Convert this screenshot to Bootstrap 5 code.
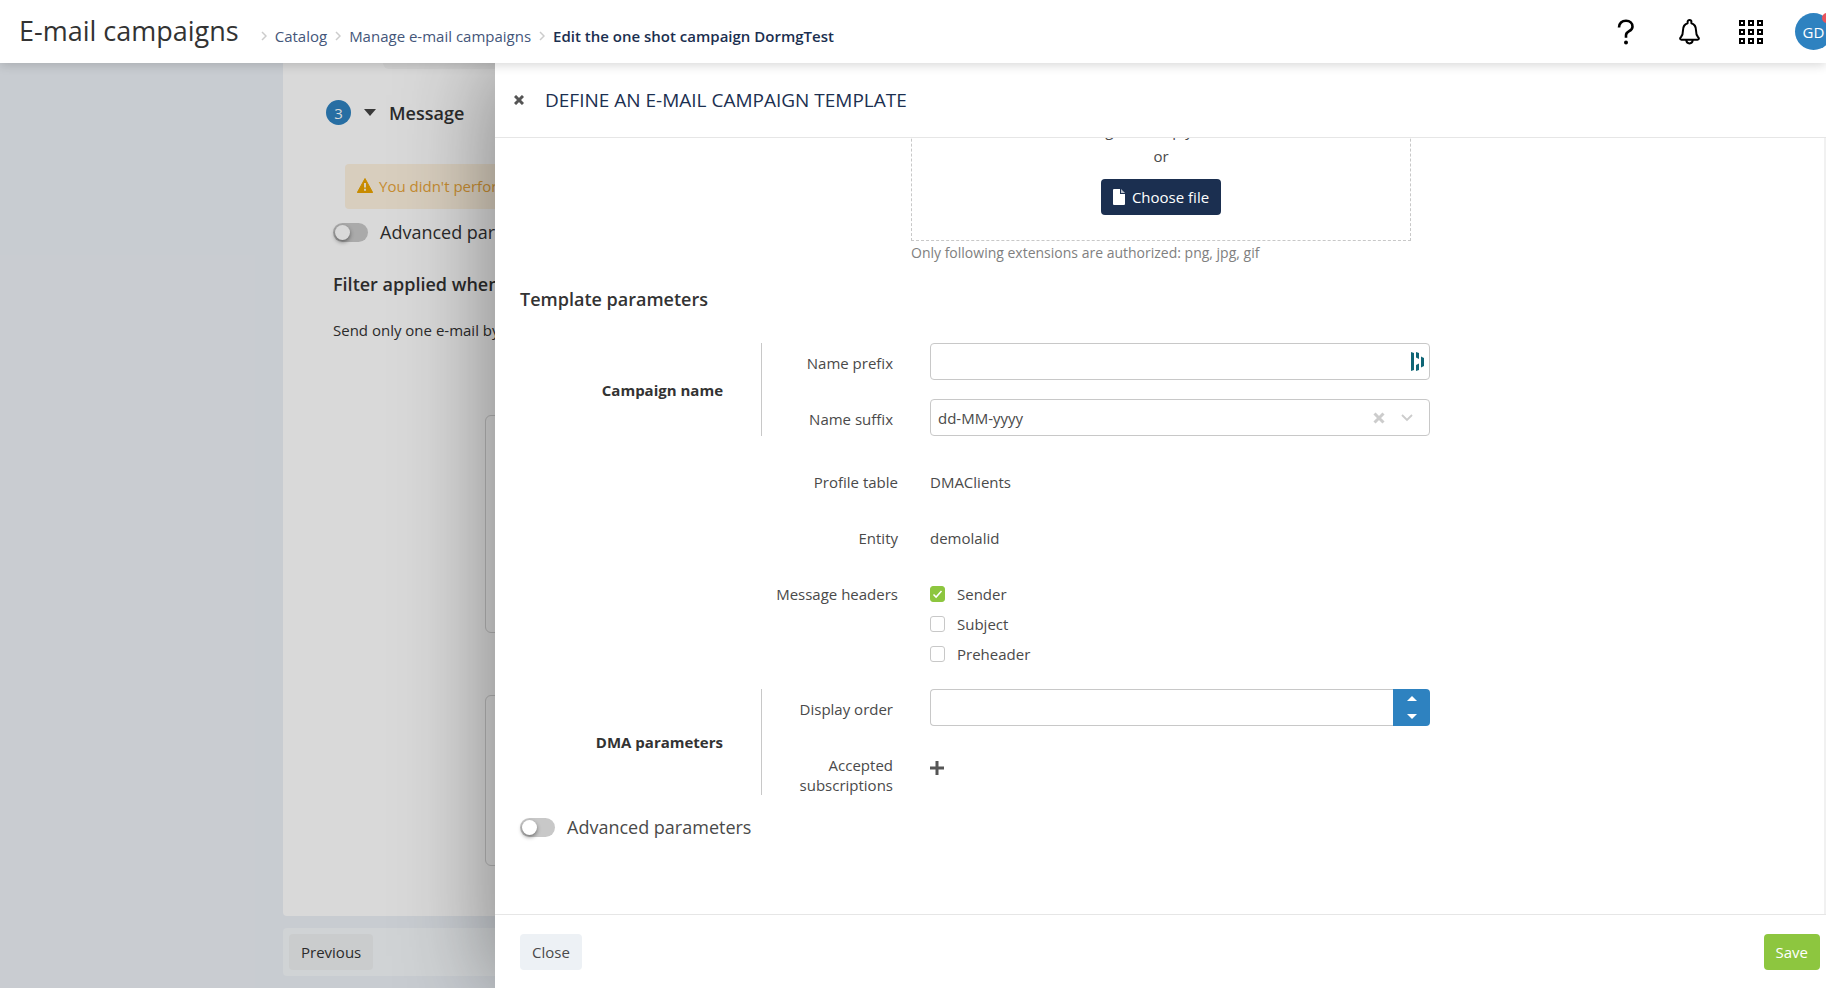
<!DOCTYPE html>
<html lang="en">
<head>
<meta charset="utf-8">
<meta name="viewport" content="width=device-width, initial-scale=1">
<title>E-mail campaigns</title>
<link href="https://cdn.jsdelivr.net/npm/bootstrap@5.3.0/dist/css/bootstrap.min.css" rel="stylesheet">
<style>
  :root { --navy: #1b2f50; --blue: #2e82c0; --green: #8dc63f; --line: #c8c8c8; --ink: #4a4a4a; --head: 63px; }
  body { font-family: "Open Sans", "Noto Sans", sans-serif; font-size: 15px; line-height: 20px; color: var(--ink); background: #ecf0f6; height: 100vh; overflow: hidden; }
  svg { display: block; flex: none; }
  .topbar { height: var(--head); background: #fff; box-shadow: 0 2px 10px rgba(0,0,0,.16); z-index: 30; position: relative; padding-left: 19px; }
  .topbar h1 { font-size: 27px; line-height: 36px; font-weight: 400; color: #333; padding-bottom: 2px; }
  .crumbs { gap: 8px; margin-left: 22px; padding-top: 8px; }
  .crumbs a { color: #44567a; text-decoration: none; }
  .crumbs [aria-current] { color: var(--navy); font-weight: 600; }
  .tool { border: 0; background: none; padding: 0; color: #000; }
  .tools { gap: 39px; margin-right: -6px; }
  .avatar { width: 37px; height: 37px; background: var(--blue); color: #fff; margin-left: -7px; }
  .avatar-dot { position: absolute; top: 0; right: 0; width: 10px; height: 10px; background: #e8535b; }
  .stage { height: calc(100vh - var(--head)); position: relative; overflow: hidden; }
  .page-col { margin-left: 283px; margin-right: 24px; color: #333; }
  .sheet { background: #fff; border-radius: 0 0 4px 4px; padding: 0 0 50px 50px; }
  .stub { height: 6px; margin-left: 50px; background: #f7f7f7; border-radius: 0 0 6px 6px; }
  .step-head { margin: 31px 0 0 -7px; gap: 13px; }
  .step-no { width: 25px; height: 25px; background: var(--blue); color: #fff; }
  .h18 { font-size: 18px; line-height: 24px; font-weight: 600; color: #333; margin: 0; }
  .notice { margin: 39px 24px 11px 12px; height: 45px; padding: 0 12px 2px; gap: 6px; background: #fef3e0; color: #e9a53a; border-radius: 4px; }
  .frame { margin: 0 24px 0 152px; border: 1px solid #d6d6d6; border-radius: 6px; }
  .frame-a { height: 218px; margin-top: 75px; }
  .frame-b { height: 171px; margin-top: 62px; }
  .strip { margin-top: 12px; padding: 6px; background: #f5f8fb; border-radius: 4px; }
  .act { height: 36px; padding: 0 12px; font-size: 15px; line-height: 20px; border: 0; border-radius: 4px; }
  .act-prev { background: #eef0f1; color: #333; }
  .act-close { background: #edf1f5; color: var(--ink); }
  .act-save { background: var(--green); color: #fff; }
  .act-file { background: var(--navy); color: #fff; gap: 7px; }
  .switch-row { gap: 12px; font-size: 18px; line-height: 24px; }
  .switch-row input { appearance: none; flex: none; width: 35px; height: 19px; margin: 0; border-radius: 10px; background: #c8c8c8; padding: 2px; }
  .switch-row input::before { content: ""; display: block; width: 15px; height: 15px; border-radius: 50%; background: #fff; box-shadow: 0 2px 4px rgba(0,0,0,.45); }
  .shade { position: absolute; inset: 0; background: rgba(0,0,0,.15); }
  .drawer { position: absolute; top: 0; bottom: 0; right: 0; left: 495px; background: #fff; box-shadow: 0 0 90px rgba(0,0,0,.42); }
  .drawer-head { height: 75px; border-bottom: 1px solid #e6e6e6; padding-left: 19px; gap: 21px; }
  .drawer-head h2 { font-size: 19px; line-height: 28px; color: var(--navy); font-weight: 400; }
  .drawer-main { overflow: hidden; border-right: 2px solid #f1f1f1; padding-left: 25px; min-height: 0; }
  .drawer-foot { height: 74px; border-top: 1px solid #e6e6e6; padding: 0 6px 0 25px; }
  .drawer-form { margin-top: -44px; }
  .drop-col { margin-left: 391px; width: 500px; max-width: 60%; }
  .drop-box { border: 1px dashed var(--line); padding: 25px 0; }
  .drop-or { margin: 6px 0 13px; }
  .hint { font-size: 14px; color: #808080; margin-top: 2px; }
  .group-name { width: 241px; padding-right: 38px; font-weight: 700; color: #333; }
  .group-rows { border-left: 1px solid var(--line); display: grid; row-gap: 19px; }
  .group-rows .lbl { width: 168px; padding: 10px 37px 0 20px; text-align: right; flex: none; }
  .field { width: 500px; position: relative; }
  .box { width: 100%; height: 37px; border: 1px solid var(--line); border-radius: 4px; background: #fff; color: var(--ink); padding: 0 7px; font-size: 15px; }
  select.box { appearance: none; }
  input[type=number].box { appearance: textfield; border-right: 0; border-radius: 4px 0 0 4px; }
  .inside { position: absolute; top: 0; height: 37px; right: 5px; pointer-events: none; }
  .pair { display: grid; grid-template-columns: 378px 1fr; column-gap: 32px; }
  .pairs { display: grid; row-gap: 36px; margin: 36px 0 25px; }
  .pair > :first-child { text-align: right; }
  .checks { display: grid; row-gap: 10px; }
  .checks label { gap: 12px; }
  .checks input { appearance: none; width: 15px; height: 16px; margin: 0; border: 1px solid var(--line); border-radius: 3px; }
  .checks input:checked { border-color: var(--green); background: var(--green) url("data:image/svg+xml,%3Csvg xmlns='http://www.w3.org/2000/svg' viewBox='0 0 13 14'%3E%3Cpath d='M2.5 7.5l2.6 2.6L10.5 4' fill='none' stroke='%23fff' stroke-width='1.5'/%3E%3C/svg%3E") center/13px 14px no-repeat; }
  .steps { width: 37px; height: 37px; flex: none; background: var(--blue); border-radius: 0 4px 4px 0; overflow: hidden; }
  .steps button { flex: 1; border: 0; padding: 0; background: none; }
</style>
</head>
<body>
<header class="topbar d-flex align-items-center">
  <h1 class="m-0">E-mail campaigns</h1>
  <nav class="crumbs d-flex align-items-center" aria-label="Breadcrumb">
    <svg width="6" height="10" viewBox="0 0 6 10" fill="none" stroke="#ccc" stroke-width="1.5"><path d="M1 1l4 4-4 4"/></svg>
    <a href="#">Catalog</a>
    <svg width="6" height="10" viewBox="0 0 6 10" fill="none" stroke="#ccc" stroke-width="1.5"><path d="M1 1l4 4-4 4"/></svg>
    <a href="#">Manage e-mail campaigns</a>
    <svg width="6" height="10" viewBox="0 0 6 10" fill="none" stroke="#ccc" stroke-width="1.5"><path d="M1 1l4 4-4 4"/></svg>
    <span aria-current="page">Edit the one shot campaign DormgTest</span>
  </nav>
  <div class="tools d-flex align-items-center ms-auto">
    <button class="tool me-1" type="button" aria-label="Help"><svg width="21" height="26" viewBox="0 0 21 26" fill="none" stroke="#000" stroke-width="2.6"><path d="M4 8.5C4 4.300 7 1.800 11 1.800s6.500 2.500 6.500 5.900c0 5-6.500 4-6.500 8.500v2.500"/><circle cx="11" cy="23.500" r="2" fill="#000" stroke="none"/></svg></button>
    <button class="tool" type="button" aria-label="Notifications"><svg width="21" height="26" viewBox="0 0 21 26" fill="none" stroke="#000" stroke-width="2" stroke-linejoin="round"><path d="M8.600 4.300V2.800c0-2.400 3.800-2.400 3.800 0v1.500c3 1 4.600 3.700 4.600 7 0 3.700.6 5.200 2 6.700 1.200 1.200 1.300 2.700-.4 2.700H2.400c-1.700 0-1.600-1.500-.4-2.700 1.400-1.500 2-3 2-6.700 0-3.300 1.600-6 4.600-7z"/><path d="M7.300 21c.2 4.500 6.200 4.500 6.400 0"/></svg></button>
    <button class="tool" type="button" aria-label="Applications"><svg width="24" height="24" viewBox="0 0 24 24" fill="none" stroke="#000" stroke-width="2"><g id="r"><rect x="1" y="1" width="4" height="4"/><rect x="10" y="1" width="4" height="4"/><rect x="19" y="1" width="4" height="4"/></g><use href="#r" y="9"/><use href="#r" y="18"/></svg></button>
    <button class="tool avatar rounded-circle position-relative" type="button">GD<span class="avatar-dot rounded-circle"></span></button>
  </div>
</header>

<div class="stage">
  <main class="page-col">
    <section class="sheet">
      <div class="stub"></div>
      <div class="step-head d-flex align-items-center">
        <span class="step-no rounded-circle d-flex align-items-center justify-content-center">3</span>
        <svg width="12" height="7" viewBox="0 0 12 7"><path d="M0 0h12L6 7z" fill="#444"/></svg>
        <h2 class="h18">Message</h2>
      </div>
      <div class="notice d-flex align-items-center">
        <svg width="16" height="15" viewBox="0 0 16 15"><path d="M8 .5L15.700 14.500H.3z" fill="#eba400" stroke="#eba400" stroke-linejoin="round"/><path d="M8 5v4.500M8 10.800v2" stroke="#fef3e0" stroke-width="2"/></svg>
        <span>You didn't perform</span>
      </div>
      <label class="switch-row d-flex align-items-center"><input type="checkbox" role="switch">Advanced parameters</label>
      <h3 class="h18 mt-4 pt-1">Filter applied when</h3>
      <p class="m-0 mt-4">Send only one e-mail by</p>
      <div class="frame frame-a"></div>
      <div class="frame frame-b"></div>
    </section>
    <div class="strip"><button class="act act-prev" type="button">Previous</button></div>
  </main>
  <div class="shade"></div>

  <aside class="drawer d-flex flex-column" aria-label="Define an e-mail campaign template">
    <div class="drawer-head d-flex align-items-center">
      <button class="tool" type="button" aria-label="Close panel"><svg width="10" height="10" viewBox="0 0 10 10" stroke="#555" stroke-width="3"><path d="M1 1l8 8M9 1L1 9"/></svg></button>
      <h2 class="m-0">DEFINE AN E-MAIL CAMPAIGN TEMPLATE</h2>
    </div>
    <div class="drawer-main flex-grow-1">
      <form class="drawer-form">
        <div class="drop-col">
          <div class="drop-box d-flex flex-column align-items-center">
            <div>Drag and drop your file</div>
            <div class="drop-or">or</div>
            <button class="act act-file d-flex align-items-center" type="button">
              <svg width="12" height="16" viewBox="0 0 12 16" fill="#fff"><path d="M1 0h6v5h5v10a1 1 0 0 1-1 1H1a1 1 0 0 1-1-1V1a1 1 0 0 1 1-1z"/><path d="M8 0l4 4H8z" opacity=".7"/></svg>Choose file</button>
          </div>
          <div class="hint">Only following extensions are authorized: png, jpg, gif</div>
        </div>
        <h3 class="h18 mt-4">Template parameters</h3>

        <fieldset class="d-flex align-items-stretch mt-4 pt-2" aria-labelledby="g1">
          <div class="group-name d-flex align-items-center justify-content-end" id="g1">Campaign name</div>
          <div class="group-rows">
            <div class="d-flex">
              <label class="lbl" for="prefix">Name prefix</label>
              <div class="field">
                <input class="box" id="prefix" type="text">
                <span class="inside d-flex align-items-center"><svg width="14" height="19" viewBox="0 0 14 19" fill="#0e6575"><path d="M0 0l3 1v17l-3 1zM5 0l3 1v6l-3-1.500zM5 13l3-1.500V18l-3 1zM10 4.500l3 1.500v8l-3 1.500z"/></svg></span>
              </div>
            </div>
            <div class="d-flex">
              <label class="lbl" for="suffix">Name suffix</label>
              <div class="field">
                <select class="box" id="suffix"><option>dd-MM-yyyy</option></select>
                <span class="inside d-flex align-items-center gap-3 pe-2 me-1"><svg width="12" height="12" viewBox="0 0 12 12" stroke="#ccc" stroke-width="3"><path d="M1.500 1.500l9 9M10.500 1.500l-9 9"/></svg><svg width="12" height="8" viewBox="0 0 12 8" fill="none" stroke="#ccc" stroke-width="1.800"><path d="M1 1l5 5 5-5"/></svg></span>
              </div>
            </div>
          </div>
        </fieldset>

        <div class="pairs">
          <div class="pair"><span>Profile table</span><span>DMAClients</span></div>
          <div class="pair"><span>Entity</span><span>demolalid</span></div>
          <div class="pair" role="group" aria-labelledby="mh">
            <span id="mh">Message headers</span>
            <div class="checks">
              <label class="d-flex align-items-center"><input type="checkbox" checked>Sender</label>
              <label class="d-flex align-items-center"><input type="checkbox">Subject</label>
              <label class="d-flex align-items-center"><input type="checkbox">Preheader</label>
            </div>
          </div>
        </div>

        <fieldset class="d-flex align-items-stretch" aria-labelledby="g2">
          <div class="group-name d-flex align-items-center justify-content-end" id="g2">DMA parameters</div>
          <div class="group-rows">
            <div class="d-flex">
              <label class="lbl" for="order">Display order</label>
              <div class="field d-flex">
                <input class="box" id="order" type="number">
                <div class="steps d-flex flex-column">
                  <button type="button" aria-label="Increase"><svg class="mx-auto" width="10" height="5" viewBox="0 0 10 5"><path d="M0 5h10L5 0z" fill="#fff"/></svg></button>
                  <button type="button" aria-label="Decrease"><svg class="mx-auto" width="10" height="5" viewBox="0 0 10 5"><path d="M0 0h10L5 5z" fill="#fff"/></svg></button>
                </div>
              </div>
            </div>
            <div class="d-flex align-items-start">
              <span class="lbl">Accepted subscriptions</span>
              <button class="tool pt-3" type="button" aria-label="Add subscription"><svg width="14" height="14" viewBox="0 0 14 14" stroke="#555" stroke-width="3"><path d="M7 0v14M0 7h14"/></svg></button>
            </div>
          </div>
        </fieldset>

        <label class="switch-row d-flex align-items-center mt-3 pt-1"><input type="checkbox" role="switch">Advanced parameters</label>
      </form>
    </div>
    <div class="drawer-foot d-flex align-items-center justify-content-between">
      <button class="act act-close" type="button">Close</button>
      <button class="act act-save" type="button">Save</button>
    </div>
  </aside>
</div>
<script src="https://cdn.jsdelivr.net/npm/bootstrap@5.3.0/dist/js/bootstrap.bundle.min.js"></script>
</body>
</html>
